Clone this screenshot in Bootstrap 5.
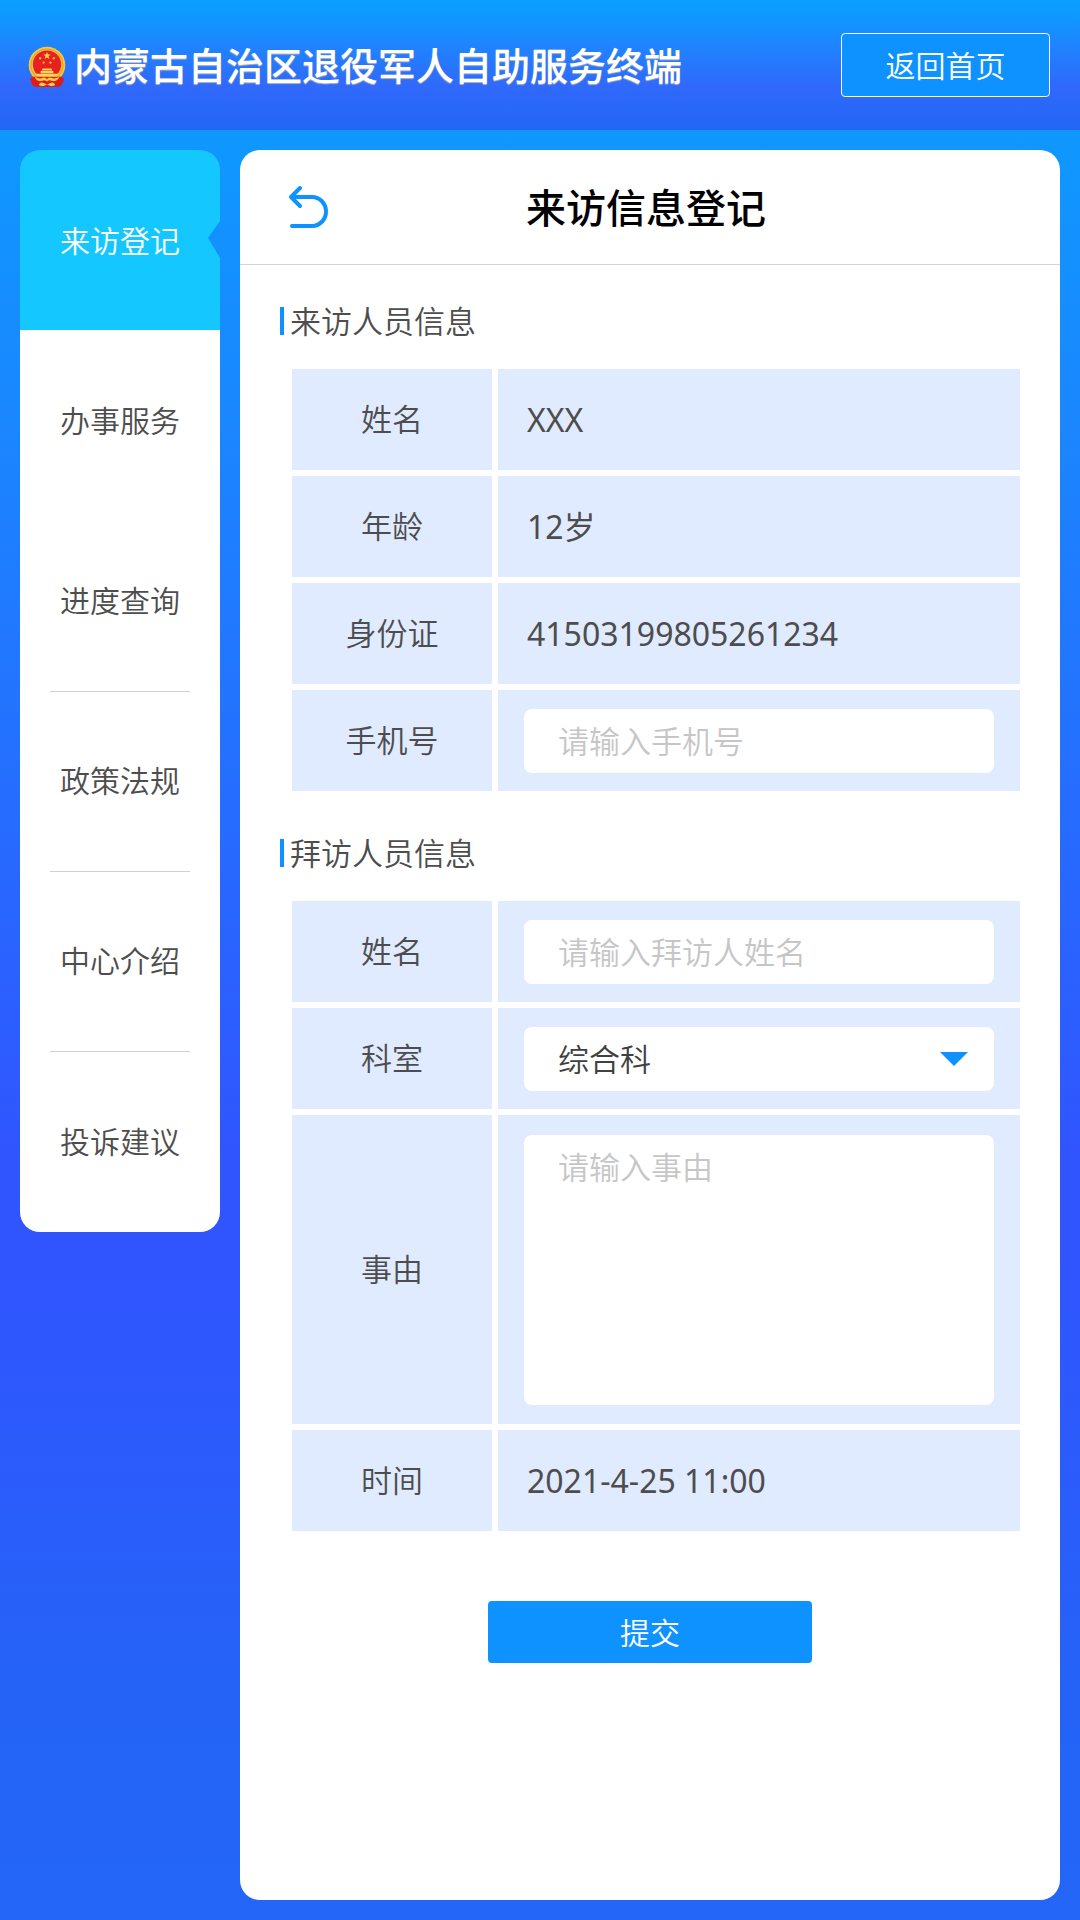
<!DOCTYPE html>
<html lang="zh-CN">
<head>
<meta charset="utf-8">
<meta name="viewport" content="width=device-width, initial-scale=1">
<title>来访信息登记</title>
<link href="https://cdn.jsdelivr.net/npm/bootstrap@5.3.0/dist/css/bootstrap.min.css" rel="stylesheet">
<style>
  :root { --accent: #0d92ff; --ink: #4d4d4d; --cell: #e0ebff; }
  body {
    min-height: 100vh;
    font-family: "Noto Sans CJK SC", sans-serif;
    font-size: 30px;
    font-weight: 350;
    line-height: 44px;
    color: var(--ink);
    background: linear-gradient(#0a9fff 0%, #0f98ff 7%, #1b85ff 23%, #3055ff 60%, #3055ff 66%, #2563f7 88%, #2366f8 100%);
  }
  .topbar { height: 130px; padding: 0 30px 0 28px; background: linear-gradient(#0a9fff 0%, #0f98ff 14%, #1f84ff 35%, #3069fc 66%, #2366f5 100%); }
  .emblem { width: 38px; height: 42px; }
  .site-title { font-size: 38px; line-height: 56px; font-weight: 500; color: #fff; text-shadow: 0 1px 1px #b8b4b4; padding-bottom: 2px; }
  .home-btn { width: 209px; height: 64px; border: 1px solid #fff; border-radius: 4px; background: var(--accent); color: #fff; font-size: 30px; font-weight: 350; padding: 0 0 2px; }
  .layout { padding: 20px; gap: 20px; }
  .side { width: 200px; border-radius: 20px; overflow: hidden; }
  .side a { height: 180px; padding-bottom: 2px; background: #fff; color: var(--ink); text-decoration: none; position: relative; }
  .side a:last-child { height: 182px; }
  .side a.current { background: #14c8ff; color: #fff; clip-path: polygon(0 0, 100% 0, 100% 71px, 188px 88px, 100% 108px, 100% 100%, 0 100%); }
  .side a.ruled::after { content: ""; position: absolute; left: 30px; right: 30px; bottom: -2px; height: 1px; background: #d0d0d0; z-index: 1; }
  .panel { background: #fff; border-radius: 20px; }
  .panel-top { height: 115px; padding: 0 48px; border-bottom: 1px solid #d4d4d4; }
  .panel-top h1 { font-size: 40px; line-height: 60px; font-weight: 500; color: #000; padding-bottom: 2px; }
  .back { width: 40px; height: 44px; padding: 0; border: 0; background: none; }
  .body-pad { padding: 34px 40px 0; }
  .sec-title { position: relative; font-size: 31px; line-height: 42px; font-weight: 350; padding: 0 0 2px 10px; }
  .sec-title::before { content: ""; position: absolute; left: 0; top: 8px; width: 4px; height: 28px; background: var(--accent); }
  .sheet { margin: 26px 0 40px 12px; gap: 6px; }
  .line { gap: 6px; min-height: 101px; }
  .line > * { background: var(--cell); }
  .key { width: 200px; padding-bottom: 3px; font-size: 31px; }
  .val { padding: 18px 26px; font-family: "Noto Sans", "Noto Sans CJK SC", sans-serif; font-size: 32px; }
  .plain { padding-left: 29px; font-weight: 400; }
  .field { height: 64px; border: 0; border-radius: 8px; background: #fff; padding: 0 34px 2px; font-family: "Noto Sans CJK SC", sans-serif; font-size: 31px; font-weight: 350; color: #404040; appearance: none; outline: 0; }
  .field::placeholder { color: #c6c6c6; opacity: 1; }
  textarea.field { height: 270px; padding: 9px 34px; resize: none; }
  .tall { height: 309px; }
  .caret { right: 26px; top: 25px; pointer-events: none; }
  .send { width: 324px; height: 62px; border: 0; border-radius: 4px; background: var(--accent); color: #fff; font-size: 30px; font-weight: 350; padding: 0 0 2px; margin-top: 30px; }
</style>
</head>
<body class="d-flex flex-column">
<header class="topbar d-flex align-items-center justify-content-between">
  <div class="d-flex align-items-center gap-2">
    <svg class="emblem mt-1" viewBox="0 0 39 42" aria-hidden="true">
      <path d="M5 27 L5 38 Q6 41 12 41.500 L27 41.500 Q33 41 34 38 L34 27Z" fill="#e0191b"/>
      <circle cx="19.500" cy="19" r="18.800" fill="#f9c53c"/>
      <circle cx="19.500" cy="19" r="16.500" fill="none" stroke="#e59a25" stroke-width="1"/>
      <circle cx="19.500" cy="18.500" r="14.500" fill="#e8201f"/>
      <path d="M19.500 5.500l1 2.600 2.800.1-2.200 1.800.8 2.700-2.400-1.500-2.400 1.500.8-2.700-2.200-1.800 2.800-.1z" fill="#ffd34c"/>
      <g fill="#fbb53a"><circle cx="12.500" cy="12" r="1.200"/><circle cx="26.500" cy="12" r="1.200"/><circle cx="16" cy="16.500" r="1.200"/><circle cx="23" cy="16.500" r="1.200"/></g>
      <path d="M15 22.500h9l1 2h-11zM13 25h13v2.500H13zM8 28h23l-3 3.500H11z" fill="#ffd65a"/>
      <path d="M5 31 2 33q2 6 4 8l6 .5h15l6-.5q3-3 4-8l-3-2z" fill="#e0191b"/>
      <path d="M7 31q5 3 8 1 3-1 4.500 1.500Q21 31 24 32q3 2 8-1-2 6-8 4-2-1-4.500 1-2.500-2-4.500-1-6 2-8-4z" fill="#ffcb48"/>
      <path d="M11 39q2-3 5-1.500l3.500 1.500 3.500-1.500q3-1.500 5 1.500-1 2-5 1.500l-3.500-1.500-3.500 1.500q-4 .5-5-1.500z" fill="#ffcb48"/>
    </svg>
    <div class="site-title">内蒙古自治区退役军人自助服务终端</div>
  </div>
  <button type="button" class="home-btn">返回首页</button>
</header>

<div class="layout d-flex flex-grow-1">
  <nav class="side align-self-start d-flex flex-column flex-shrink-0" aria-label="主菜单">
    <a href="#" class="current d-flex align-items-center justify-content-center" aria-current="page">来访登记</a>
    <a href="#" class="d-flex align-items-center justify-content-center">办事服务</a>
    <a href="#" class="ruled d-flex align-items-center justify-content-center">进度查询</a>
    <a href="#" class="ruled d-flex align-items-center justify-content-center">政策法规</a>
    <a href="#" class="ruled d-flex align-items-center justify-content-center">中心介绍</a>
    <a href="#" class="d-flex align-items-center justify-content-center">投诉建议</a>
  </nav>

  <main class="panel flex-grow-1">
    <div class="panel-top d-flex align-items-center">
      <button type="button" class="back d-flex" aria-label="返回">
        <svg width="40" height="44" viewBox="0 0 40 44" fill="none" stroke="#0d92ff" stroke-width="4" stroke-linecap="round" stroke-linejoin="round"><path d="M12 3 3 12l9 9M3 12h21a14 14.500 0 0 1 0 29H4"/></svg>
      </button>
      <h1 class="flex-grow-1 text-center mb-0 me-5">来访信息登记</h1>
    </div>

    <form class="body-pad">
      <h2 class="sec-title mb-0">来访人员信息</h2>
      <div class="sheet d-flex flex-column">
        <div class="line d-flex">
          <div class="key d-flex align-items-center justify-content-center">姓名</div>
          <div class="val plain flex-grow-1 d-flex align-items-center">XXX</div>
        </div>
        <div class="line d-flex">
          <div class="key d-flex align-items-center justify-content-center">年龄</div>
          <div class="val plain flex-grow-1 d-flex align-items-center">12岁</div>
        </div>
        <div class="line d-flex">
          <div class="key d-flex align-items-center justify-content-center">身份证</div>
          <div class="val plain flex-grow-1 d-flex align-items-center">41503199805261234</div>
        </div>
        <div class="line d-flex">
          <label for="phone" class="key d-flex align-items-center justify-content-center">手机号</label>
          <div class="val flex-grow-1 d-flex align-items-center"><input id="phone" type="tel" class="field w-100" placeholder="请输入手机号"></div>
        </div>
      </div>

      <h2 class="sec-title mb-0">拜访人员信息</h2>
      <div class="sheet d-flex flex-column">
        <div class="line d-flex">
          <label for="host" class="key d-flex align-items-center justify-content-center">姓名</label>
          <div class="val flex-grow-1 d-flex align-items-center"><input id="host" type="text" class="field w-100" placeholder="请输入拜访人姓名"></div>
        </div>
        <div class="line d-flex">
          <label for="dept" class="key d-flex align-items-center justify-content-center">科室</label>
          <div class="val flex-grow-1 d-flex align-items-center">
            <div class="position-relative w-100 d-flex">
              <select id="dept" class="field w-100"><option>综合科</option></select>
              <svg class="caret position-absolute" width="28" height="14" viewBox="0 0 28 14" aria-hidden="true"><path d="M0 0h28L14 14z" fill="#0d92ff"/></svg>
            </div>
          </div>
        </div>
        <div class="line tall d-flex">
          <label for="reason" class="key d-flex align-items-center justify-content-center">事由</label>
          <div class="val flex-grow-1 d-flex align-items-center"><textarea id="reason" class="field w-100" placeholder="请输入事由"></textarea></div>
        </div>
        <div class="line d-flex">
          <div class="key d-flex align-items-center justify-content-center">时间</div>
          <div class="val plain flex-grow-1 d-flex align-items-center">2021-4-25 11:00</div>
        </div>
      </div>

      <div class="d-flex justify-content-center"><button type="submit" class="send">提交</button></div>
    </form>
  </main>
</div>
<script src="https://cdn.jsdelivr.net/npm/bootstrap@5.3.0/dist/js/bootstrap.bundle.min.js"></script>
</body>
</html>
